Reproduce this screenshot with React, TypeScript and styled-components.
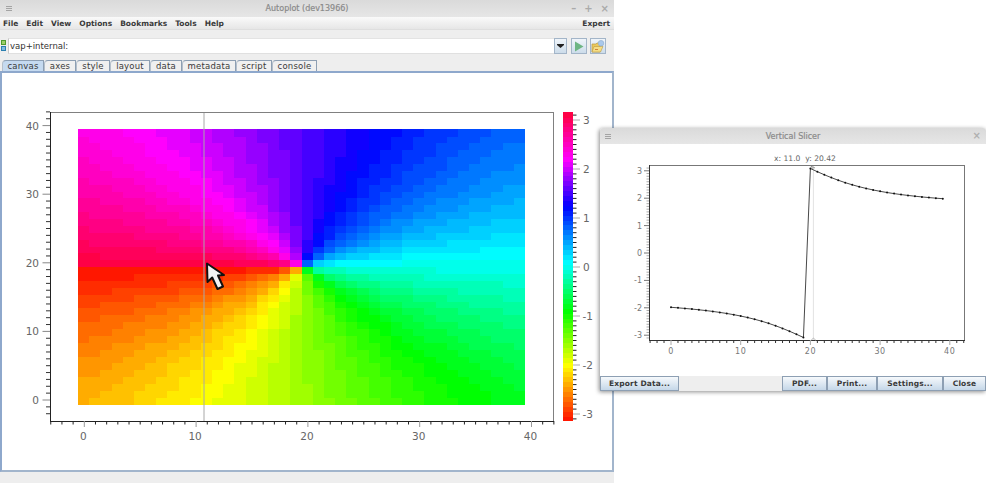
import React from 'react';
import styled, { createGlobalStyle } from 'styled-components';

const GlobalStyle = createGlobalStyle`
  html, body { margin: 0; height: 100%; background: #fff; }
  #root { height: 100%; }
`;

const uiFont = `"DejaVu Sans", "Liberation Sans", sans-serif`;

const Page = styled.div`
  position: relative;
  height: 100vh;
  overflow: hidden;
  background: #fff;
  font-family: ${uiFont};
`;

const MainWindow = styled.div`
  width: 614px;
  height: 100%;
  display: flex;
  flex-direction: column;
  background: #eeeeee;
`;

const TitleBar = styled.div`
  height: 17px;
  flex: none;
  display: flex;
  align-items: center;
  justify-content: center;
  position: relative;
  background: linear-gradient(#dadada, #e6e6e6);
`;

const TitleText = styled.span`
  font-size: 8px;
  color: #8a8a8a;
  -webkit-text-stroke: 0.2px #8a8a8a;
`;

const WindowMenu = styled.span`
  position: absolute;
  left: 6px;
  top: 6px;
  width: 6px;
  height: 5px;
  border-top: 1px solid #a4a4a4;
  border-bottom: 1px solid #a4a4a4;
  box-sizing: border-box;
  &::after {
    content: '';
    display: block;
    margin-top: 1px;
    height: 1px;
    background: #a4a4a4;
  }
`;

const WindowControls = styled.div`
  position: absolute;
  right: 5px;
  top: 0;
  height: 17px;
  display: flex;
  align-items: center;
  gap: 8px;
  color: #aaaaaa;
  font-size: 10px;
  font-weight: 700;
`;

const MenuBar = styled.div`
  height: 12px;
  flex: none;
  display: flex;
  align-items: center;
  padding: 0 4px 0 3px;
  gap: 8px;
  background: linear-gradient(#fafafa, #e6e6e6);
  border-bottom: 1px solid #dedede;
  font-size: 7.5px;
  font-weight: 700;
  color: #3a3a3a;
`;

const MenuSpacer = styled.span`
  flex: 1;
`;

const AddressRow = styled.div`
  height: 16px;
  margin-top: 8px;
  flex: none;
  display: flex;
  align-items: stretch;
  padding-left: 1px;
`;

const Grip = styled.div`
  width: 7px;
  display: flex;
  flex-direction: column;
  gap: 1px;
  padding-top: 2px;
`;

const GripDot = styled.span<{ $color: string; $fill: string }>`
  width: 3px;
  height: 3px;
  border: 1px solid ${({ $color }) => $color};
  background: ${({ $fill }) => $fill};
`;

const UrlField = styled.div`
  width: 546px;
  display: flex;
  align-items: center;
  padding-left: 1px;
  box-sizing: border-box;
  background: #fff;
  border-top: 1px solid #e3e3e3;
  border-left: 1px solid #c8c8c8;
  border-bottom: 1px solid #e0e0e0;
  font-size: 8.5px;
  color: #333;
`;

const ToolButton = styled.button<{ $width: number; $gap: number }>`
  width: ${({ $width }) => $width}px;
  margin-left: ${({ $gap }) => $gap}px;
  padding: 0;
  display: flex;
  align-items: center;
  justify-content: center;
  box-sizing: border-box;
  border: 1px solid #a3b5c8;
  background: linear-gradient(#f0f5fa, #ccdcea);
`;

const TabStrip = styled.div`
  height: 11px;
  margin-top: 6px;
  flex: none;
  display: flex;
  padding-left: 2px;
`;

const Tab = styled.div<{ $active?: boolean; $width: number }>`
  width: ${({ $width }) => $width}px;
  box-sizing: border-box;
  display: flex;
  align-items: center;
  justify-content: center;
  border: 1px solid #8d9fb3;
  border-bottom: none;
  border-left-color: #b4bfcb;
  border-radius: 4px 0 0 0;
  background: ${({ $active }) => ($active ? '#c5daf0' : '#f0f0f0')};
  font-size: 8.5px;
  letter-spacing: 0.2px;
  color: #3a3a3a;
`;

const CanvasPanel = styled.div`
  height: 401px;
  flex: none;
  box-sizing: border-box;
  border: 2px solid #8ea8cc;
  border-right-color: #a2b5cc;
  border-bottom-color: #a2b5cc;
  background: #fff;
`;

const PlotSvg = styled.svg`
  display: block;
  text {
    font-family: ${uiFont};
  }
`;

const SlicerWindow = styled.div`
  position: absolute;
  left: 600px;
  top: 128px;
  width: 386px;
  height: 263px;
  display: flex;
  flex-direction: column;
  background: #fff;
  border-radius: 3px 3px 0 0;
  box-shadow: -1px 1px 4px rgba(0, 0, 0, 0.45);
`;

const SlicerTitle = styled(TitleBar)`
  height: 16px;
  border-radius: 3px 3px 0 0;
`;

const SlicerMenu = styled(WindowMenu)`
  left: 5px;
  top: 6px;
`;

const SlicerClose = styled.span`
  position: absolute;
  right: 5px;
  top: 2px;
  color: #b0b0b0;
  font-size: 10px;
  font-weight: 700;
`;

const ButtonRow = styled.div`
  height: 15px;
  flex: none;
  display: flex;
  background: #eeeeee;
`;

const ButtonGap = styled.span`
  flex: 1;
`;

const DialogButton = styled.button<{ $width: number }>`
  width: ${({ $width }) => $width}px;
  padding: 0;
  box-sizing: border-box;
  border: 1px solid #8d9fb3;
  background: linear-gradient(#f6f9fc, #c5d7e8);
  font-family: ${uiFont};
  font-size: 7.5px;
  font-weight: 700;
  letter-spacing: 0.15px;
  color: #3a3a3a;
`;

const range = (from: number, to: number) => {
  const out: number[] = [];
  for (let i = from; i <= to; i++) out.push(i);
  return out;
};

// hue stops read off the colorbar in the screenshot
const hueStops: [number, number][] = [
  [-3.2, 0], [-2, 60], [-0.9, 120], [0, 175], [1.25, 240], [2.2, 300], [3.2, 348],
];

const hueOf = (v: number) => {
  for (let i = 1; i < hueStops.length; i++) {
    const [v0, h0] = hueStops[i - 1];
    const [v1, h1] = hueStops[i];
    if (v <= v1) return h0 + ((v - v0) / (v1 - v0)) * (h1 - h0);
  }
  return 348;
};

const colorOf = (v: number) => {
  const q = Math.floor((v + Math.PI) / 0.1) * 0.1 - Math.PI + 0.05;
  return `hsl(${hueOf(q).toFixed(1)}, 100%, 50%)`;
};

const px = (x: number) => 84.3 + x * 11.18;
const py = (y: number) => 399 - y * 6.86;

const Heatmap = () => (
  <g shapeRendering="crispEdges">
    {range(0, 39).map((i) =>
      range(0, 39).map((j) => (
        <rect
          key={`${i}-${j}`}
          x={78 + i * 11.175}
          y={403.2 - (j + 1) * 6.875}
          width={11.6}
          height={7.3}
          fill={colorOf(Math.atan2(j - 19.5, i - 19.5))}
        />
      )),
    )}
  </g>
);

const MainAxes = () => (
  <g>
    <rect x={50.5} y={111.5} width={503} height={309} fill="none" stroke="#808080" />
    <path d="M50.5 111V421M50 420.5H554" stroke="#222" fill="none" />
    {range(-3, 42).map((x) => (
      <path
        key={x}
        d={`M${px(x)} 420V${x % 10 === 0 ? 426 : 423.5}`}
        stroke={x % 10 === 0 ? '#999' : '#222'}
      />
    ))}
    {range(-2, 42).map((y) => (
      <path
        key={y}
        d={`M${y % 10 === 0 ? 42.5 : 46} ${py(y)}H50`}
        stroke={y % 10 === 0 ? '#888' : '#333'}
      />
    ))}
    {[0, 10, 20, 30, 40].map((x) => (
      <text key={x} x={px(x) - 1} y={439} fontSize={10.5} fill="#666" textAnchor="middle">
        {x}
      </text>
    ))}
    {[0, 10, 20, 30, 40].map((y) => (
      <text key={y} x={39} y={py(y) + 4} fontSize={10.5} fill="#666" textAnchor="end">
        {y}
      </text>
    ))}
  </g>
);

const Colorbar = () => {
  const cy = (v: number) => 266 - v * 49;
  const levels = range(0, 62);
  return (
    <g>
      <g shapeRendering="crispEdges">
        {levels.map((l) => {
          const v = -Math.PI + l * 0.1;
          return <rect key={l} x={563} y={cy(v + 0.1)} width={10} height={5.4} fill={colorOf(v + 0.05)} />;
        })}
      </g>
      {range(-31, 31).map((t) => (
        <path
          key={t}
          d={`M573 ${cy(t / 10)}H${t % 10 === 0 ? 580 : 576.5}`}
          stroke={t % 10 === 0 ? '#aaa' : '#222'}
        />
      ))}
      {[3, 2, 1, 0, -1, -2, -3].map((t) => (
        <text key={t} x={t < 0 ? 582.5 : 583} y={cy(t) + 4} fontSize={10.5} fill="#666">
          {t}
        </text>
      ))}
    </g>
  );
};

const Arrow = () => (
  <path
    d="M207 262.5L207.5 281L212.2 276.5L217.5 288L223 285.5L218 274.5L224 274Z"
    fill="#f4f4f4"
    stroke="#111"
    strokeWidth={2}
    strokeLinejoin="round"
  />
);

const sx = (x: number) => 671 + x * 6.97;
const sy = (y: number) => 253 - y * 27.4;

const slice = range(0, 39).map((j) => ({ x: j, y: Math.atan2(j - 19.5, -8.5) }));

const SlicerPlot = () => (
  <PlotSvg width={386} height={232} viewBox="600 144 386 232">
    <text x={805} y={161} fontSize={7.6} fill="#666" textAnchor="middle" xmlSpace="preserve">
      x: 11.0  y: 20.42
    </text>
    <path d="M813.4 165V341" stroke="#e2e2e2" />
    <rect x={649.5} y={165.5} width={315} height={175} fill="none" stroke="#777" />
    <path d="M649.5 165V341M649 340.5H965" stroke="#333" fill="none" />
    {range(-3, 42).map((x) => (
      <path key={x} d={`M${sx(x)} 340V${x % 10 === 0 ? 345 : 343}`} stroke={x % 10 === 0 ? '#aaa' : '#333'} />
    ))}
    {range(-31, 31).map((t) => (
      <path
        key={t}
        d={`M${t % 10 === 0 ? 644 : 646.5} ${sy(t / 10)}H649`}
        stroke={t % 10 === 0 ? '#777' : '#aaa'}
      />
    ))}
    {[0, 10, 20, 30, 40].map((x) => (
      <text key={x} x={sx(x)} y={354} fontSize={8} fill="#777" textAnchor="middle" letterSpacing={0.6}>
        {x}
      </text>
    ))}
    {[3, 2, 1, 0, -1, -2, -3].map((t) => (
      <text key={t} x={642} y={sy(t) + 3} fontSize={8} fill="#777" textAnchor="end">
        {t}
      </text>
    ))}
    <polyline
      points={slice.map((p) => `${sx(p.x)},${sy(p.y)}`).join(' ')}
      fill="none"
      stroke="#333"
      strokeWidth={0.9}
    />
    {slice.map((p) => (
      <circle key={p.x} cx={sx(p.x)} cy={sy(p.y)} r={1} fill="#111" />
    ))}
    <path d="M811 166L815 168M811 166L813 169" stroke="#777" strokeWidth={0.7} fill="none" />
    <path d="M811 340.5L813.4 338L816 340.5" stroke="#aaa" strokeWidth={0.8} fill="none" />
  </PlotSvg>
);

const DropArrow = () => (
  <svg width="7" height="4" viewBox="0 0 7 4">
    <path d="M0 0H7V1L3.5 4L0 1Z" fill="#222" />
  </svg>
);

const PlayIcon = () => (
  <svg width="10" height="11" viewBox="0 0 10 11">
    <path d="M1 0.5L9.5 5.5L1 10.5Z" fill="#6db583" />
  </svg>
);

const FolderIcon = () => (
  <svg width="14" height="13" viewBox="0 0 14 13">
    <path d="M1 4H5L6 3H9V12H1Z" fill="#ecc95a" stroke="#b99a45" strokeWidth={0.7} />
    <path d="M1 12L3 6.5H12L9.5 12Z" fill="#f6dd84" stroke="#b99a45" strokeWidth={0.6} />
    <path d="M4 9H7V10H4Z" fill="#d0843a" />
    <circle cx="10" cy="3.2" r="2.8" fill="#a9c8ea" stroke="#8dabcf" strokeWidth={0.6} />
  </svg>
);

const tabs: { label: string; width: number }[] = [
  { label: 'canvas', width: 42 },
  { label: 'axes', width: 32 },
  { label: 'style', width: 34 },
  { label: 'layout', width: 40 },
  { label: 'data', width: 32 },
  { label: 'metadata', width: 54 },
  { label: 'script', width: 36 },
  { label: 'console', width: 45 },
];

const menus = ['File', 'Edit', 'View', 'Options', 'Bookmarks', 'Tools', 'Help'];

const App = () => (
  <Page>
    <GlobalStyle />
    <MainWindow>
      <TitleBar>
        <WindowMenu />
        <TitleText>Autoplot (dev13966)</TitleText>
        <WindowControls>
          <span>–</span>
          <span>+</span>
          <span>×</span>
        </WindowControls>
      </TitleBar>
      <MenuBar>
        {menus.map((m) => (
          <span key={m}>{m}</span>
        ))}
        <MenuSpacer />
        <span>Expert</span>
      </MenuBar>
      <AddressRow>
        <Grip>
          <GripDot $color="#4f9a2f" $fill="#9ccf6a" />
          <GripDot $color="#2a7fb0" $fill="#7fbbe0" />
        </Grip>
        <UrlField>vap+internal:</UrlField>
        <ToolButton $width={13} $gap={0}>
          <DropArrow />
        </ToolButton>
        <ToolButton $width={16} $gap={4}>
          <PlayIcon />
        </ToolButton>
        <ToolButton $width={16} $gap={3}>
          <FolderIcon />
        </ToolButton>
      </AddressRow>
      <TabStrip>
        {tabs.map((t, i) => (
          <Tab key={t.label} $active={i === 0} $width={t.width}>
            {t.label}
          </Tab>
        ))}
      </TabStrip>
      <CanvasPanel>
        <PlotSvg width={610} height={397} viewBox="2 72 610 397">
          <Heatmap />
          <MainAxes />
          <Colorbar />
          <path d="M204 112V420" stroke="#a8a8a8" strokeWidth={1} />
          <Arrow />
        </PlotSvg>
      </CanvasPanel>
    </MainWindow>
    <SlicerWindow>
      <SlicerTitle>
        <SlicerMenu />
        <TitleText>Vertical Slicer</TitleText>
        <SlicerClose>×</SlicerClose>
      </SlicerTitle>
      <SlicerPlot />
      <ButtonRow>
        <DialogButton $width={79}>Export Data...</DialogButton>
        <ButtonGap />
        <DialogButton $width={45}>PDF...</DialogButton>
        <DialogButton $width={50}>Print...</DialogButton>
        <DialogButton $width={66}>Settings...</DialogButton>
        <DialogButton $width={43}>Close</DialogButton>
      </ButtonRow>
    </SlicerWindow>
  </Page>
);

export default App;
